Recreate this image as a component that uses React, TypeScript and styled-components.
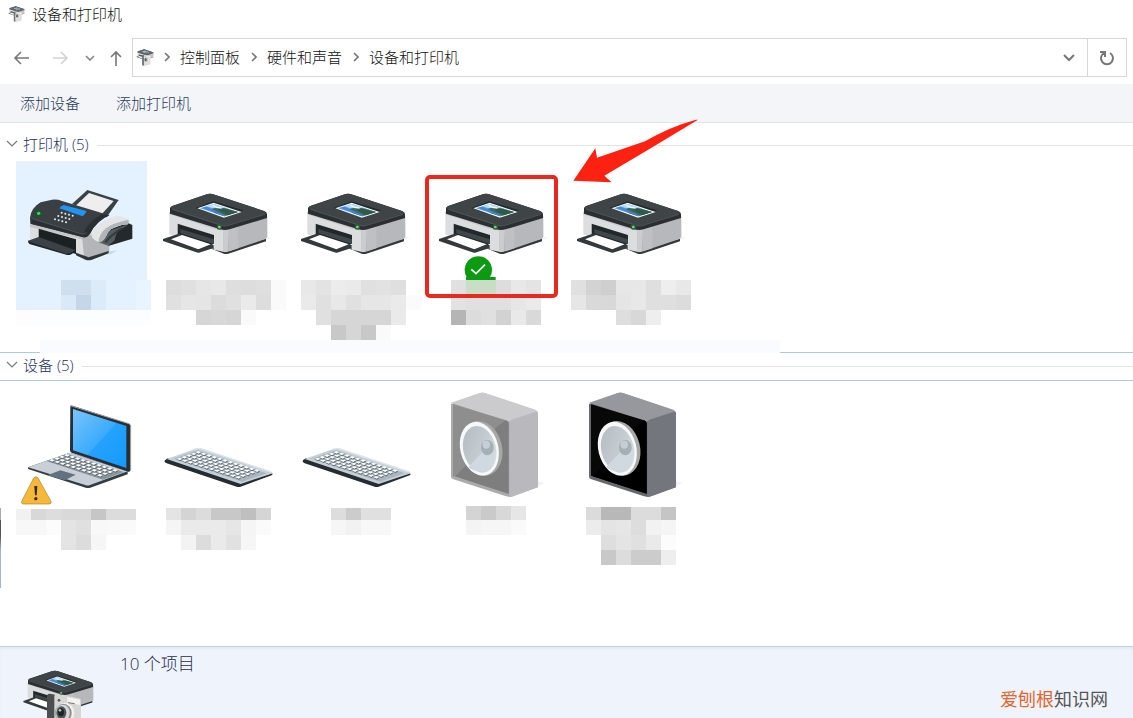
import React from "react";
import styled, { createGlobalStyle } from "styled-components";

const GlobalStyle = createGlobalStyle`
  * { box-sizing: border-box; }
  body {
    margin: 0;
    background: #fff;
    font-family: "Open Sans", "Noto Sans CJK SC", sans-serif;
    font-size: 15px;
    font-weight: 300;
    line-height: 20px;
    color: #111;
  }
  button { font: inherit; color: inherit; background: none; border: 0; padding: 0; }
  a { color: inherit; text-decoration: none; }
  ul, ol { list-style: none; margin: 0; padding: 0; }
  svg { display: block; }
`;

const Window = styled.div`
  min-height: 100vh;
  display: flex;
  flex-direction: column;
  overflow: hidden;
`;

const TitleBar = styled.header`
  display: flex;
  align-items: center;
  gap: 7px;
  height: 30px;
  padding: 0 0 2px 8px;
`;

const Title = styled.h1`
  margin: 0;
  font-size: 15px;
  font-weight: 300;
`;

const NavBar = styled.nav`
  display: flex;
  align-items: center;
  padding: 8px 6px 7px 12px;
`;

const NavButtons = styled.div`
  display: flex;
  align-items: center;
  width: 120px;
`;

const NavButton = styled.button<{ $width: number; $tone: string }>`
  width: ${(p) => p.$width}px;
  height: 20px;
  display: flex;
  align-items: center;
  color: ${(p) => p.$tone};
`;

const AddressBar = styled.div`
  flex: 1;
  height: 39px;
  display: flex;
  align-items: center;
  padding-left: 3px;
  border: 1px solid #d6d6d6;
`;

const Crumbs = styled.ol`
  flex: 1;
  display: flex;
  align-items: center;
  margin-left: 10px;
  padding-bottom: 2px;
`;

const Crumb = styled.li`
  display: flex;
  align-items: center;
  gap: 10px;
  margin-right: 11px;
  color: #777;

  a { color: #111; }
`;

const BoxButton = styled.button<{ $edge?: boolean }>`
  width: ${(p) => (p.$edge ? 39 : 37)}px;
  height: 37px;
  display: flex;
  align-items: center;
  justify-content: center;
  color: #777;
  border-left: ${(p) => (p.$edge ? "1px solid #d6d6d6" : "0")};
`;

const Toolbar = styled.div`
  display: flex;
  align-items: center;
  gap: 36px;
  height: 39px;
  padding-left: 20px;
  background: #f4f5f8;
  border-bottom: 1px solid #e2e4e7;
`;

const ToolbarButton = styled.button`
  color: #2b3a5c;
`;

const Content = styled.main`
  flex: 1;
`;

const Group = styled.section`
  position: relative;
`;

const GroupHeader = styled.h2<{ $ruled?: boolean }>`
  display: flex;
  align-items: center;
  gap: 8px;
  margin: 0;
  height: ${(p) => (p.$ruled ? 28 : 38)}px;
  padding: ${(p) => (p.$ruled ? "0 0 1px 6px" : "11px 0 5px 6px")};
  border-bottom: ${(p) => (p.$ruled ? "1px solid #b4cad6" : "0")};
  font-size: 15px;
  font-weight: 300;
  color: #27315f;

  &::after {
    content: "";
    flex: 1;
    height: 1px;
    background: #e3e3e3;
  }
`;

const GroupToggle = styled.button`
  display: flex;
  align-items: center;
  gap: 5px;
  padding-bottom: 2px;
  white-space: nowrap;
`;

const ToggleMark = styled.span`
  color: #777;
`;

const DeviceList = styled.ul<{ $inset?: number }>`
  display: flex;
  gap: 7px;
  padding: ${(p) => p.$inset ?? 0}px 16px 0;
`;

const Device = styled.li`
  position: relative;
  width: 131px;
`;

const DeviceButton = styled.button<{ $selected?: boolean }>`
  display: block;
  width: 100%;
  background: ${(p) => (p.$selected ? "linear-gradient(#e4f2ff 150px, transparent 150px)" : "none")};

  svg { overflow: visible; }
`;

const Callout = styled.div`
  position: absolute;
  left: -5px;
  top: 14px;
  width: 133px;
  height: 123px;
  border: 4px solid #e9291f;
  border-radius: 5px;
`;

const CalloutArrow = styled.svg`
  position: absolute;
  left: 142px;
  top: -43px;
  z-index: 1;
`;

const Divider = styled.div`
  display: flex;
  height: 13px;
`;

const DividerLine = styled.span<{ $short?: boolean }>`
  flex: ${(p) => (p.$short ? "0 0 40px" : "1")};
  border-bottom: 1px solid #a9cbdd;
`;

const DividerBand = styled.span`
  flex: 0 0 740px;
  background: #f9fbff;
`;

const EdgeMark = styled.span`
  position: absolute;
  left: 0;
  top: 155px;
  width: 1px;
  height: 80px;
  background: linear-gradient(#aaa 12px, #555 12px 28px, #a5b4cc 42px);
`;

const StatusBar = styled.footer`
  display: flex;
  align-items: flex-start;
  height: 72px;
  padding: 0 25px 0 16px;
  background: #eff3fc;
  border-top: 1px solid #c3d0da;
  box-shadow: inset 0 2px 2px #e3ebf3;
  overflow: hidden;
`;

const StatusIcon = styled.div`
  margin: 14px 14px 0 0;
`;

const StatusText = styled.p`
  flex: 1;
  margin: 7px 0 0;
  font-size: 17px;
  color: #1f2c4c;
`;

const Brand = styled.p`
  margin: 42px 0 0;
  font-size: 18px;
  font-weight: 400;
  color: #555;

  strong { font-weight: 400; color: #dd6830; }
`;

const Stroke = (p: { d: string; w: number; h: number; sw?: number }) => (
  <svg width={p.w} height={p.h} viewBox={`0 0 ${p.w} ${p.h}`} fill="none" stroke="currentColor" strokeWidth={p.sw ?? 1.6} aria-hidden>
    <path d={p.d} />
  </svg>
);

const Chevron = () => <Stroke w={6} h={10} d="M1 1l4 4-4 4" />;

/** The printer body; drawn on a grid of three units to the pixel. */
const PrinterShape = () => (
  <g>
    <path d="M345 245l30 3-35 12z" fill="#f1f1f1" />
    <path d="M190 280l42 17q6 1 12-1l113-37v-8l-115 30z" fill="#33383b" />
    <path d="M67 170v68l25 8v-40l109 34v44l34 8V215z" fill="#dcdddf" />
    <path d="M67 170v8l134 44 34 6v-12z" fill="#c9cacc" />
    <path d="M229 215v72q8 5 18 2l106-36q8-3 8-9v-60z" fill="#b7b8bb" />
    <path d="M229 220v68q6 4 13 2l4-74z" fill="#cbccce" />
    <path d="M246 216v73l28-9v-72z" fill="#bfc0c3" />
    <path d="M92 206l109 34v25l-12 8-97-31z" fill="#22272a" />
    <path d="M100 222l101 31v14l-101-32z" fill="#3f474b" />
    <path d="M48 252l47-16 105 34v9l-44 14q-4 1-8-1L48 258z" fill="#34393c" />
    <path d="M72 253l33-13 86 28-37 15z" fill="#fff" />
    <path d="M69 160q0-5 8-8l98-33q14-5 28 0l148 49q9 3 9 10v11l-112 34q-14 4-28 0L69 176z" fill="#2b2f32" />
    <path d="M72 155l103-36q14-5 28 0l148 49q8 4 4 9l-113 34q-10 3-22 0L74 162q-5-3-2-7z" fill="#3f4447" />
    <path d="M76 163l150 49q8 2 16 0l112-34" fill="none" stroke="#5c6367" strokeWidth="2" />
    <path d="M145 159l54-20 90 27-55 22z" fill="#25292c" />
    <path d="M151 160l49-17 84 28-53 17z" fill="#f4f8fb" />
    <path d="M159 160l42-13 72 24-41 13z" fill="#5c9fe2" />
    <path d="M178 154l23-7 72 24-13 4q-26-14-44-13-20 0-38-8z" fill="#b9dcf5" />
    <path d="M190 164l18-7 28 3 37 11-41 13-28-9z" fill="#3f6a6a" />
    <path d="M212 164l20-3 41 10-30 10z" fill="#2f5a45" />
    <path d="M166 158l12-3 32 15 28 12-6 2z" fill="#4488d8" />
    <path d="M196 150l12 7 16 2" fill="none" stroke="#f2f8fd" strokeWidth="4" />
    <circle cx="217" cy="216" r="8" fill="#31563a" />
    <circle cx="217" cy="216" r="4" fill="#64e070" />
  </g>
);

const FaxShape = () => (
  <g>
    <path d="M325 290l28-4-25 14z" fill="#cbd8e3" />
    <path d="M262 105l94 30-36 52-104-40z" fill="#3a4146" />
    <path d="M267 114l74 24-40 44-74-30z" fill="#eeeef0" />
    <path d="M90 200v52l26 10v-41l112 32v48l37 14 62-25v-50l-60-8z" fill="#dddee0" />
    <path d="M90 200l176 46v12L90 216z" fill="#c3c6c9" />
    <path d="M246 244l82-10v56l-63 25q-6 1-12-2z" fill="#b3b5b8" />
    <path d="M228 301l30 14q8 2 16 0l52-20v-7l-60 19-38-14z" fill="#2f3538" />
    <path d="M116 221l112 32v44l-112-34z" fill="#1b2023" />
    <path d="M84 257l32-11 111 40-16 11q-6 3-12 1L88 265q-5-3-4-8z" fill="#3b4145" />
    <path d="M84 259l115 37 12-2 16-9v5l-16 9q-6 2-12 0L88 267z" fill="#202528" />
    <path d="M90 188q4-30 32-46l34-8q18-1 30 4l142 43q-38 16-58 55-8 12-20 11L92 206z" fill="#3a3f43" />
    <path d="M92 188l158 48q16-38 55-58l23 3q-38 16-58 55-8 12-20 11L92 206z" fill="#2a2f33" />
    <path d="M94 190l152 47q10 1 14-5" fill="none" stroke="#62696f" strokeWidth="2" />
    <path d="M178 160q5-8 13-10l69 18q-4 9-12 16z" fill="#2095f3" />
    <g fill="#e9edf0">
      {[0, 1, 2].map((r) =>
        [0, 1, 2, 3].map((c) => <circle key={`${r}${c}`} cx={185 + c * 11 - r * 10} cy={173 + c * 3 + r * 10} r="3" />)
      )}
    </g>
    <circle cx="116" cy="175" r="10" fill="#1c542c" />
    <circle cx="116" cy="175" r="5" fill="#43d65e" />
    <path d="M325 225l58-22 14 7v41l-72 22z" fill="#24292c" />
    <path d="M296 262q18-20 28-34l62-20-30 20q-10 10-12 28l-19 16z" fill="#555c60" />
    <path d="M316 262q14-20 50-42" fill="none" stroke="#33393c" strokeWidth="6" />
    <path d="M276 247q-6-18 16-36 26-22 60-29l32 9q5 9 0 17-42 2-60 23-10 26-24 31-16-3-24-15z" fill="#e4e5e7" />
    <path d="M296 261q0-22 20-40 24-18 70-27 1 8-2 14-42 2-60 23-10 26-24 31z" fill="#b2b5b8" />
  </g>
);

/** Rows of small keys laid over a slanted plane. */
const Keys = (p: { x: number; y: number; rows: number; cols: number; rowStep: [number, number]; colStep: [number, number] }) => (
  <g>
    {Array.from({ length: p.rows * p.cols }, (_, i) => {
      const r = Math.floor(i / p.cols);
      const c = i % p.cols;
      const x = p.x + r * p.rowStep[0] + c * p.colStep[0];
      const y = p.y + r * p.rowStep[1] + c * p.colStep[1];
      return (
        <g key={i}>
          <path d={`M${x} ${y + 2}l7-4 10 4-7 5z`} fill="#59646c" />
          <path d={`M${x} ${y}l7-4 9 3-7 5z`} fill="#fdfeff" />
        </g>
      );
    })}
  </g>
);

const LaptopShape = () => (
  <g>
    <defs>
      <linearGradient id="screen" x1="0" y1="0" x2="1" y2="1">
        <stop offset="0" stopColor="#7bc5fb" />
        <stop offset=".52" stopColor="#3aabfc" />
        <stop offset=".53" stopColor="#25a2fd" />
        <stop offset="1" stopColor="#149afb" />
      </linearGradient>
    </defs>
    <path d="M84 262l126-44 173 56v9l-112 40q-7 2-14 0L84 267z" fill="#343d45" />
    <path d="M84 262l126-44 173 56-115 42q-5 1-10 0z" fill="#c9cfd6" />
    <path d="M139 243l62-22 171 55-63 23z" fill="#8b959e" />
    <Keys x={148} y={241} rows={4} cols={10} rowStep={[15, -5]} colStep={[16, 5]} />
    <path d="M142 286l39-15 46 13-33 17z" fill="#64717e" />
    <path d="M211 80q1-5 7-3l169 54q5 2 5 8v130q-1 7-7 6l-170-57q-5-1-5-7z" fill="#263039" />
    <path d="M211 77l176 54q5 2 5 8v130" fill="none" stroke="#aaa39c" strokeWidth="3" />
    <path d="M219 87l160 51v126l-160-53z" fill="url(#screen)" />
    <path d="M101 294q6-8 13 0l38 68q5 10-6 10H72q-11 0-6-10z" fill="#f5b83b" stroke="#a9822e" strokeWidth="2" />
    <path d="M103 318h9l-2 28h-5z" fill="#352814" />
    <circle cx="107.500" cy="356" r="5" fill="#352814" />
  </g>
);

const KeyboardShape = () => (
  <g>
    <path d="M495 241l8-6 218 72 96-27v5l-95 35q-6 2-12 0l-212-71q-7-4-3-8z" fill="#252d32" />
    <path d="M500 237l86-30q10-3 20 0l208 69q5 2 0 5l-92 31z" fill="#c4cfd6" />
    <path d="M522 236l72-25 205 69-73 25z" fill="#aab5bd" />
    <Keys x={531} y={237} rows={5} cols={12} rowStep={[14, -5]} colStep={[16, 5]} />
    <path d="M586 207q10-3 20 0l208 69" fill="none" stroke="#dde5ea" strokeWidth="4" />
  </g>
);

const SpeakerShape = (p: { id: string; top: string; side: string; front: string; shine: string; edge: string }) => (
  <g>
    <defs>
      <linearGradient id={p.id} x1="0" y1="0" x2="1" y2="1">
        <stop offset="0" stopColor="#b3bac0" />
        <stop offset=".5" stopColor="#c4cbd0" />
        <stop offset="1" stopColor="#dde5e9" />
      </linearGradient>
    </defs>
    <path d="M740 302l24 7-26 12z" fill="#f1f1f3" />
    <path d="M483 72l86-32q8-3 16 0l151 51q8 3 8 10v220l-84 30-12-2-160-52q-5-2-5-8z" fill={p.edge} />
    <path d="M483 68l86-29q8-3 16 0l151 50q7 3 6 8l-84 28z" fill={p.top} />
    <path d="M658 128q0-6 6-9l74-24q6 0 6 8v219l-78 28q-8 2-8-4z" fill={p.side} />
    <path d="M489 73l159 48q8 3 8 10v210l-167-54z" fill={p.front} />
    <path d="M495 289l42-42 82-105 28-21q9 3 9 10v210z" fill={p.shine} />
    <ellipse cx="575" cy="205" rx="61" ry="83" transform="rotate(-14 575 205)" fill="#a8a8a8" />
    <ellipse cx="568" cy="206" rx="57" ry="82" transform="rotate(-14 568 206)" fill="#f7f8f9" />
    <ellipse cx="569" cy="208" rx="49" ry="71" transform="rotate(-14 569 208)" fill={`url(#${p.id})`} />
    <path d="M534 262l46-48 34 8q-2 38-24 50-34 6-56-10z" fill="#cfd9df" />
    <ellipse cx="592" cy="203" rx="19" ry="23" fill="#a5afb6" />
    <ellipse cx="589" cy="194" rx="11" ry="12" fill="#c5ced4" />
  </g>
);

const CameraShape = () => (
  <g>
    <path d="M141 184q0-9 9-8l15 3v130l-17-4q-7-2-7-10z" fill="#4c4e52" />
    <path d="M163 184q0-7 8-6l66 12q6 1 6 8v88q0 7-7 8l-73 17z" fill="#d7d6d4" />
    <path d="M202 186l38 8v16l-38-8z" fill="#f3f3f1" />
    <path d="M204 203l20 3" stroke="#777" strokeWidth="3" />
    <circle cx="177" cy="196" r="4" fill="#55585b" />
    <ellipse cx="194" cy="234" rx="29" ry="31" fill="#f2f2f2" />
    <ellipse cx="190" cy="234" rx="25" ry="28" fill="#8d9092" />
    <ellipse cx="188" cy="234" rx="21" ry="25" fill="#d5d8da" />
    <ellipse cx="184" cy="233" rx="15" ry="19" fill="#4b5659" />
    <ellipse cx="183" cy="232" rx="9" ry="12" fill="#1c2325" />
    <circle cx="180" cy="226" r="4" fill="#a7c4c1" />
  </g>
);

const DevicesIcon = (p: { width: number; height: number; viewBox: string; opacity?: number }) => (
  <svg {...p} aria-hidden>
    <g transform="translate(38 29) scale(.67)">
      <PrinterShape />
    </g>
    <CameraShape />
  </svg>
);

/** Pixelated caption. Each row lists the tone of every 15px block; "-" is empty. */
const Mosaic = (p: { x: number; top?: number; rows: string[] }) => (
  <svg width="131" height="60" shapeRendering="crispEdges" aria-hidden>
    {p.rows.map((row, r) =>
      row.split(" ").map((tone, c) => {
        if (tone === "-") return null;
        const cut = r === 0 ? p.top ?? 0 : 0;
        const fill = tone.length === 2 ? `#${tone}${tone}${tone}` : `#${tone}`;
        return <rect key={`${r}-${c}`} x={p.x + c * 15} y={r * 15 + cut} width={15} height={15 - cut} fill={fill} />;
      })
    )}
  </svg>
);

type DeviceInfo = {
  label: string;
  viewBox: string;
  art: React.ReactNode;
  x: number;
  top?: number;
  rows: string[];
  selected?: boolean;
  marked?: boolean;
};

const printerBox = "21 18 393 357";

const printers: DeviceInfo[] = [
  {
    label: "传真", viewBox: "48 18 393 357", art: <FaxShape />, x: 0, selected: true,
    rows: ["- - - cfdfed cfdfed dcebf9 - - e8f4fe", "- - - dae9f7 c5d6e8 dcebf9 - - e8f4fe", "fd fbfdff fbfdff fbfdff fbfdff fbfdff fbfdff fbfdff fbfdff"],
  },
  {
    label: "打印机 1", viewBox: printerBox, art: <PrinterShape />, x: 12,
    rows: ["dd e0 e6 e8 de dd df fa", "e0 e6 e5 dc e0 ea dd fa", "- - d6 d8 d6 fa"],
  },
  {
    label: "打印机 2", viewBox: printerBox, art: <PrinterShape />, x: 9,
    rows: ["e8 e3 ec ea e0 e2 df", "ea e0 e8 e0 e6 e6 ea fb", "- e0 d6 d6 d6 d6 ea", "- - c8 d6 c8 fa"],
  },
  {
    label: "打印机 3", viewBox: printerBox, x: 21, marked: true,
    art: (
      <>
        <PrinterShape />
        <path d="M131 366a41 41 0 1 1 70 0h17v9h-89v-9z" fill="#0c9a12" />
        <path d="M145 343l14 13 27-27" fill="none" stroke="#fff" strokeWidth="5" />
      </>
    ),
    rows: ["e0 c8dec6 c8dcc6 dd e8 e4", "e2 e0 e0 e0 e6 ea", "b5 dc e0 d2 e9 d9"],
  },
  {
    label: "打印机 4", viewBox: printerBox, art: <PrinterShape />, x: 3,
    rows: ["e0 d3 cf e7 e7 df ee e8", "e6 d9 d8 e5 e8 df df dc", "- - - de d8 ee"],
  },
];

const devices: DeviceInfo[] = [
  {
    label: "笔记本电脑", viewBox: "48 15 393 360", art: <LaptopShape />, x: 0, top: 4,
    rows: ["f1 d8 dd d9 d9 c6 dc dc", "f8 f8 fc e4 e0 f8 f9 fa", "- - - e4 dc f6"],
  },
  {
    label: "键盘 1", viewBox: "462 15 393 360", art: <KeyboardShape />, x: 12, top: 3,
    rows: ["e4 d4 dc c8 c8 bf d5", "f5 ea ea ea e6 f5 fa", "- f3 dc ea e1 f6"],
  },
  {
    label: "键盘 2", viewBox: "462 15 393 360", art: <KeyboardShape />, x: 39, top: 3,
    rows: ["dd cc e0 e0", "f6 f2 f8 f8"],
  },
  {
    label: "扬声器 1", viewBox: "420 15 393 360", x: 36, top: 1,
    art: <SpeakerShape id="coneLight" top="#cbcbcd" side="#b8b8bd" front="#8e8e8e" shine="#7e7e7f" edge="#ababad" />,
    rows: ["d4 ca d8 e6", "f4 f6 f6 fa"],
  },
  {
    label: "扬声器 2", viewBox: "420 15 393 360", x: 18, top: 2,
    art: <SpeakerShape id="coneDark" top="#96989d" side="#74767e" front="#080808" shine="#000" edge="#66686d" />,
    rows: ["db b8 b8 dc dc c5", "ec e4 e6 dd f2 f5", "- de e4 e0 ea fc", "- c8 dc cc cc ee"],
  },
];

const DeviceItem = ({ info, height }: { info: DeviceInfo; height: number }) => (
  <Device>
    <DeviceButton $selected={info.selected} aria-label={info.label}>
      <svg width="131" height={height} viewBox={info.viewBox} aria-hidden>
        {info.art}
      </svg>
      <Mosaic x={info.x} top={info.top} rows={info.rows} />
    </DeviceButton>
    {info.marked && (
      <>
        <Callout />
        <CalloutArrow width="128" height="68" viewBox="36 24 384 204" aria-hidden>
          <path d="M414 29L262 121L133 197l22 20-115-5 66-97 5 28L255 94Q330 50 408 29z" fill="#fd2112" />
        </CalloutArrow>
      </>
    )}
  </Device>
);

const GroupTitle = (p: { text: string }) => (
  <GroupToggle>
    <ToggleMark>
      <Stroke w={12} h={8} sw={1.2} d="M1 1l5 5 5-5" />
    </ToggleMark>
    {p.text}
  </GroupToggle>
);

export default function App() {
  return (
    <>
      <GlobalStyle />
      <Window>
        <TitleBar>
          <DevicesIcon width={17} height={16} viewBox="66 104 220 206" opacity={0.8} />
          <Title>设备和打印机</Title>
        </TitleBar>
        <NavBar>
          <NavButtons>
            <NavButton $width={39} $tone="#777" aria-label="后退">
              <Stroke w={18} h={14} d="M17 7H3M9 1L3 7l6 6" />
            </NavButton>
            <NavButton $width={34} $tone="#d2d2d2" aria-label="前进">
              <Stroke w={18} h={14} d="M2 7h14M10 1l6 6-6 6" />
            </NavButton>
            <NavButton $width={25} $tone="#888" aria-label="最近浏览的位置">
              <Stroke w={10} h={8} d="M1 2l4 4 4-4" />
            </NavButton>
            <NavButton $width={20} $tone="#777" aria-label="上移">
              <Stroke w={12} h={18} d="M6 17V3M1 8l5-5 5 5" />
            </NavButton>
          </NavButtons>
          <AddressBar>
            <DevicesIcon width={18} height={17} viewBox="66 104 220 206" opacity={0.8} />
            <Crumbs>
              <Crumb><Chevron /><a href="#panel">控制面板</a></Crumb>
              <Crumb><Chevron /><a href="#hardware">硬件和声音</a></Crumb>
              <Crumb><Chevron /><a href="#devices">设备和打印机</a></Crumb>
            </Crumbs>
            <BoxButton aria-label="展开"><Stroke w={12} h={9} sw={2} d="M1 2l5 5 5-5" /></BoxButton>
            <BoxButton $edge aria-label="刷新">
              <Stroke w={16} h={16} sw={2} d="M11 3a6 6 0 1 1-6 0M1 2h5v5" />
            </BoxButton>
          </AddressBar>
        </NavBar>
        <Toolbar>
          <ToolbarButton>添加设备</ToolbarButton>
          <ToolbarButton>添加打印机</ToolbarButton>
        </Toolbar>
        <Content>
          <Group>
            <GroupHeader><GroupTitle text="打印机 (5)" /></GroupHeader>
            <DeviceList>
              {printers.map((d) => <DeviceItem key={d.label} info={d} height={119} />)}
            </DeviceList>
            <Divider><DividerLine $short /><DividerBand /><DividerLine /></Divider>
          </Group>
          <Group>
            <EdgeMark />
            <GroupHeader $ruled><GroupTitle text="设备 (5)" /></GroupHeader>
            <DeviceList $inset={4}>
              {devices.map((d) => <DeviceItem key={d.label} info={d} height={120} />)}
            </DeviceList>
          </Group>
        </Content>
        <StatusBar>
          <StatusIcon>
            <DevicesIcon width={90} height={57} viewBox="48 78 270 171" />
          </StatusIcon>
          <StatusText>10 个项目</StatusText>
          <Brand><strong>爱刨根</strong>知识网</Brand>
        </StatusBar>
      </Window>
    </>
  );
}
